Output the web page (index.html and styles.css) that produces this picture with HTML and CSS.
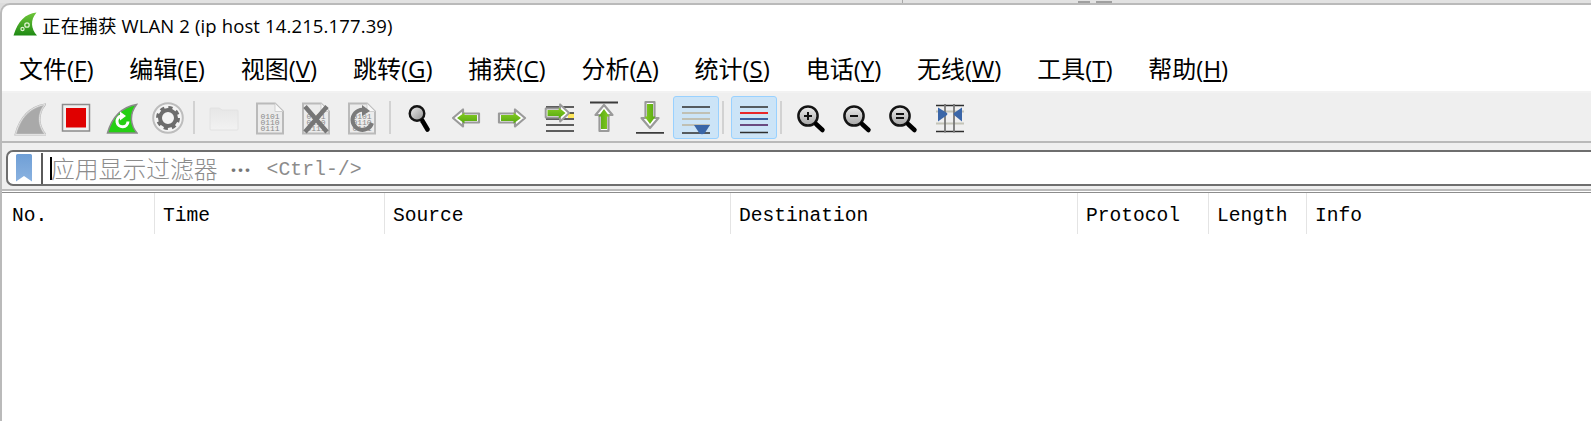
FILE: index.html
```html
<!DOCTYPE html>
<html lang="en">
<head>
  <meta charset="UTF-8">
  <meta name="viewport" content="width=device-width, initial-scale=1.0">
  <title>Wireshark</title>
  <link rel="stylesheet" href="styles.css">
</head>
<body>
  <!-- sliver of the window behind -->
  <div class="behind">
    <span class="behind-line"></span>
    <span class="behind-mark behind-mark-a"></span>
    <span class="behind-mark behind-mark-b"></span>
  </div>

  <div class="window">
    <!-- Title bar -->
    <div class="titlebar">
      <svg class="app-icon" width="24" height="24" viewBox="0 0 24 24">
        <defs>
          <linearGradient id="appGreen" x1="0" y1="0" x2="0" y2="1">
            <stop offset="0" stop-color="#6fc63a"/>
            <stop offset="1" stop-color="#1f8a14"/>
          </linearGradient>
        </defs>
        <path d="M23.5 .5C12 2 5 9 .5 23.500H24C18 17 17 8 23.500 .5Z" fill="url(#appGreen)"/>
        <circle cx="14" cy="13" r="2.200" fill="none" stroke="#dff2d0" stroke-width="1.300"/>
        <circle cx="9.500" cy="17" r="1.600" fill="none" stroke="#dff2d0" stroke-width="1.200"/>
      </svg>
      <span class="title-text">正在捕获 WLAN 2 (ip host 14.215.177.39)</span>
    </div>

    <!-- Menu -->
    <div class="menubar">
      <span class="menu-item">文件(<u>F</u>)</span>
      <span class="menu-item">编辑(<u>E</u>)</span>
      <span class="menu-item">视图(<u>V</u>)</span>
      <span class="menu-item">跳转(<u>G</u>)</span>
      <span class="menu-item">捕获(<u>C</u>)</span>
      <span class="menu-item">分析(<u>A</u>)</span>
      <span class="menu-item">统计(<u>S</u>)</span>
      <span class="menu-item">电话(<u>Y</u>)</span>
      <span class="menu-item">无线(<u>W</u>)</span>
      <span class="menu-item">工具(<u>T</u>)</span>
      <span class="menu-item">帮助(<u>H</u>)</span>
    </div>

    <!-- Toolbar -->
    <div class="toolbar">
      <div class="tool">
        <svg width="32" height="36" viewBox="0 0 32 36">
          <path d="M31 4.500C19 6.500 7 14 1.500 34.500H31.500C25 27 22.500 15 31 4.500Z" fill="#a9a9a9" stroke="#bcbcbc" stroke-width="2"/>
          <path d="M31 4.500C19 6.500 7 14 1.500 34.500H31.500C25 27 22.500 15 31 4.500Z" fill="none" stroke="#f2f2f2" stroke-width=".7"/>
        </svg>
      </div>
      <div class="tool">
        <svg width="32" height="36" viewBox="0 0 32 36">
          <rect x="2.500" y="4.500" width="27" height="26.500" fill="#f0f0f0" stroke="#8c8c8c" stroke-width="1.500"/>
          <rect x="6" y="8" width="20" height="19.500" fill="#e00000"/>
        </svg>
      </div>
      <div class="tool">
        <svg width="32" height="36" viewBox="0 0 32 36">
          <path d="M30.500 4.500C19 6.500 7 14 1.500 33H31C25 26 22.500 15 30.500 4.500Z" fill="#25cf14" stroke="#8a8a8a" stroke-width="1.500"/>
          <path d="M22 21.500A5.500 5.500 0 1 1 15 16" fill="none" stroke="#fff" stroke-width="3"/>
          <path d="M14 11.500L20 16L14 20.500Z" fill="#fff"/>
        </svg>
      </div>
      <div class="tool">
        <svg width="32" height="36" viewBox="0 0 32 36">
          <circle cx="16" cy="18" r="14.800" fill="#f4f4f4" stroke="#bdbdbd" stroke-width="2"/>
          <circle cx="16" cy="18" r="8" fill="none" stroke="#6d6d6d" stroke-width="4"/>
          <circle cx="16" cy="18" r="10.500" fill="none" stroke="#6d6d6d" stroke-width="3" stroke-dasharray="4.200 4.050"/>
        </svg>
      </div>
      <span class="tool-sep"></span>
      <div class="tool">
        <svg width="32" height="36" viewBox="0 0 32 36">
          <defs>
            <linearGradient id="folderFill" x1="0" y1="0" x2="0" y2="1">
              <stop offset="0" stop-color="#e6e6e6"/>
              <stop offset="1" stop-color="#f2f2f2"/>
            </linearGradient>
          </defs>
          <path d="M2 9a1 1 0 0 1 1-1H11L14 10H29a1 1 0 0 1 1 1V29a1 1 0 0 1-1 1H3a1 1 0 0 1-1-1Z" fill="url(#folderFill)" stroke="#e2e2e2"/>
        </svg>
      </div>
      <div class="tool">
        <svg width="32" height="36" viewBox="0 0 32 36">
          <use href="#doc"/>
        </svg>
      </div>
      <div class="tool">
        <svg width="32" height="36" viewBox="0 0 32 36">
          <use href="#doc"/>
          <path d="M5 6.500L27 32M27 6.500L5 32" stroke="#767676" stroke-width="4.500" fill="none"/>
        </svg>
      </div>
      <div class="tool">
        <svg width="32" height="36" viewBox="0 0 32 36">
          <use href="#doc"/>
          <path d="M20 10.500A10 10 0 1 0 26 23" fill="none" stroke="#7a7a7a" stroke-width="4"/>
          <path d="M16 5L24 11L16 16Z" fill="#7a7a7a"/>
        </svg>
      </div>
      <span class="tool-sep tool-sep-wide"></span>
      <div class="tool">
        <svg width="32" height="36" viewBox="0 0 32 36">
          <defs>
            <linearGradient id="lensFill" x1="0" y1="0" x2="1" y2="1">
              <stop offset="0" stop-color="#f0f0f0"/>
              <stop offset="1" stop-color="#8f8f8f"/>
            </linearGradient>
          </defs>
          <circle cx="13" cy="13.500" r="7.300" fill="url(#lensFill)" stroke="#141414" stroke-width="2.400"/>
          <path d="M18.500 21L23.500 29.500" stroke="#000" stroke-width="4.600" stroke-linecap="round"/>
        </svg>
      </div>
      <div class="tool">
        <svg width="32" height="36" viewBox="0 0 32 36">
          <use href="#arrow" transform="translate(2 0)"/>
        </svg>
      </div>
      <div class="tool">
        <svg width="32" height="36" viewBox="0 0 32 36">
          <use href="#arrow" transform="translate(30 0) scale(-1 1)"/>
        </svg>
      </div>
      <div class="tool">
        <svg width="32" height="36" viewBox="0 0 32 36">
          <rect x="26" y="13" width="6" height="5" fill="#ffe75a"/>
          <path d="M4 7H32M4 13H32M4 19H32M4 25H32M4 31H32" stroke="#2e2e2e" stroke-width="1.600"/>
          <use href="#arrow" transform="translate(28 -5) scale(-.9 1)"/>
        </svg>
      </div>
      <div class="tool">
        <svg width="32" height="36" viewBox="0 0 32 36">
          <path d="M2 2.500H30" stroke="#3c3c3c" stroke-width="1.800"/>
          <use href="#arrow" transform="translate(34 4) rotate(90)"/>
        </svg>
      </div>
      <div class="tool">
        <svg width="32" height="36" viewBox="0 0 32 36">
          <path d="M2 32.800H30" stroke="#3c3c3c" stroke-width="1.800"/>
          <use href="#arrow" transform="translate(-2 29) rotate(-90)"/>
        </svg>
      </div>
      <div class="tool tool-on">
        <svg width="32" height="36" viewBox="0 0 32 36">
          <path d="M2 7H30M2 33H30" stroke="#2e2e2e" stroke-width="1.600"/>
          <path d="M2 13H30M2 19H30M2 25H30" stroke="#c0c0b4" stroke-width="1.800"/>
          <path d="M14 25H30L24.500 33.500Q22 35 19.500 33.500Z" fill="#3a66a8"/>
        </svg>
      </div>
      <span class="tool-sep tool-sep-tight"></span>
      <div class="tool tool-on">
        <svg width="32" height="36" viewBox="0 0 32 36">
          <path d="M2 7H30M2 32.500H30" stroke="#2e2e2e" stroke-width="1.600"/>
          <path d="M2 13H30" stroke="#e8262a" stroke-width="1.800"/>
          <path d="M2 19H30" stroke="#3a5fa0" stroke-width="1.800"/>
          <path d="M2 25H30" stroke="#6a4a80" stroke-width="1.800"/>
        </svg>
      </div>
      <span class="tool-sep tool-sep-tight"></span>
      <div class="tool">
        <svg width="32" height="36" viewBox="0 0 32 36">
          <use href="#lens"/>
          <path d="M8 16H16M12 12V20" stroke="#111" stroke-width="2"/>
        </svg>
      </div>
      <div class="tool">
        <svg width="32" height="36" viewBox="0 0 32 36">
          <use href="#lens"/>
          <path d="M8 16H16" stroke="#111" stroke-width="2"/>
        </svg>
      </div>
      <div class="tool">
        <svg width="32" height="36" viewBox="0 0 32 36">
          <use href="#lens"/>
          <path d="M8 14H16M8 18H16" stroke="#111" stroke-width="2"/>
        </svg>
      </div>
      <div class="tool">
        <svg width="32" height="36" viewBox="0 0 32 36">
          <path d="M2 5.500H30M2 31.500H30" stroke="#2e2e2e" stroke-width="1.600"/>
          <path d="M2 11.500H30M2 23.500H30" stroke="#c4c4b8" stroke-width="1.800"/>
          <path d="M11 4V32.500M20 4V32.500" stroke="#777" stroke-width="1.800"/>
          <path d="M4 7.500L13 13Q13.800 14 13 15L4 21.500Z" fill="#3a66a8"/>
          <path d="M28 7.500L20 13Q19.200 14 20 15L28 21.500Z" fill="#3a66a8"/>
        </svg>
      </div>
    </div>

    <!-- Display filter -->
    <div class="filterbar">
      <div class="filter-box">
        <svg class="bookmark" width="16" height="28" viewBox="0 0 16 28">
          <defs>
            <linearGradient id="markFill" x1="0" y1="0" x2="0" y2="1">
              <stop offset="0" stop-color="#6f9fd6"/>
              <stop offset="1" stop-color="#8ab2e0"/>
            </linearGradient>
          </defs>
          <path d="M0 1.500Q0 0 1.500 0H14.500Q16 0 16 1.500V27.500L8 22L0 27.500Z" fill="url(#markFill)"/>
        </svg>
        <span class="filter-divider"></span>
        <span class="filter-caret"></span>
        <span class="filter-hint">应用显示过滤器</span>
        <span class="filter-dots">···</span>
        <span class="filter-key">&lt;Ctrl-/&gt;</span>
      </div>
    </div>

    <!-- Packet list -->
    <div class="packet-list">
      <div class="packet-head">
        <div class="col col-no">No.</div>
        <div class="col col-time">Time</div>
        <div class="col col-src">Source</div>
        <div class="col col-dst">Destination</div>
        <div class="col col-proto">Protocol</div>
        <div class="col col-len">Length</div>
        <div class="col col-info">Info</div>
      </div>
    </div>
  </div>

  <!-- shared icon parts -->
  <svg class="icon-defs" width="0" height="0">
    <defs>
      <linearGradient id="arrowGreen" x1="0" y1="0" x2="0" y2="1">
        <stop offset="0" stop-color="#86cc24"/>
        <stop offset="1" stop-color="#55a80f"/>
      </linearGradient>
      <linearGradient id="zoomFill" x1="0" y1="0" x2="0" y2="1">
        <stop offset="0" stop-color="#eeeeee"/>
        <stop offset="1" stop-color="#a4a4a4"/>
      </linearGradient>
      <g id="doc">
        <path d="M3 3.500H21L29 11.500V33.500H3Z" fill="#ececec" stroke="#bababa" stroke-width="2"/>
        <path d="M21 3.500V11.500H29" fill="#f8f8f8" stroke="#cfcfcf"/>
        <text class="doc-bits" x="16" y="19">0101</text>
        <text class="doc-bits" x="16" y="25">0110</text>
        <text class="doc-bits" x="16" y="31">0111</text>
      </g>
      <g id="arrow">
        <path d="M1 18L11 9.500V13.500H27V22.500H11V26.500Z" fill="#fff" stroke="#9a9a9a" stroke-width="2.200" stroke-linejoin="round"/>
        <path d="M5 18L12.500 12.500V15H25V21H12.500V23.500Z" fill="url(#arrowGreen)"/>
      </g>
      <g id="lens">
        <circle cx="12" cy="16" r="9.600" fill="url(#zoomFill)" stroke="#141414" stroke-width="2.500"/>
        <path d="M20 24L26.500 30" stroke="#000" stroke-width="4.500" stroke-linecap="round"/>
      </g>
    </defs>
  </svg>
</body>
</html>
```

FILE: styles.css
```css
body {
  font-family: "Open Sans", "Noto Sans CJK SC", sans-serif;
  margin: 0;
  padding: 0;
  background-color: #dcdcdc;
  color: #000;
  height: 421px;
  overflow: hidden;
}

.behind {
  height: 3px;
  position: relative;
  overflow: hidden;
  background-color: #e2e2e2;
}

.behind-line {
  position: absolute;
  left: 902px;
  top: 0;
  width: 1px;
  height: 3px;
  background-color: #a8a8a8;
}

.behind-mark {
  position: absolute;
  top: 1px;
  height: 2px;
  background-color: #a0a0a0;
}

.behind-mark-a {
  left: 1078px;
  width: 12px;
}

.behind-mark-b {
  left: 1096px;
  width: 16px;
}

.window {
  height: 418px;
  box-sizing: border-box;
  background-color: #fff;
  border-top: 2px solid #bababa;
  border-left: 2px solid #bababa;
  border-top-left-radius: 10px;
  overflow: hidden;
}

.titlebar {
  height: 36px;
  display: flex;
  align-items: center;
  padding-left: 11px;
}

.app-icon {
  flex: none;
  margin-top: 2px;
}

.title-text {
  margin-left: 5px;
  font-size: 18.500px;
  letter-spacing: .13px;
  margin-top: 3px;
  white-space: nowrap;
}

.menubar {
  height: 52px;
  display: flex;
  align-items: center;
  gap: 35.800px;
  padding-left: 17px;
  box-sizing: border-box;
  border-bottom: 2px solid #f2f2f2;
}

.menu-item {
  font-size: 24px;
  white-space: nowrap;
  margin-top: 2px;
}

.toolbar {
  height: 50px;
  box-sizing: border-box;
  padding-left: 5px;
  display: flex;
  background-color: #efefef;
  border-bottom: 2px solid #b9b9b9;
  padding-top: 3px;
}

.tool {
  width: 46px;
  height: 43px;
  box-sizing: border-box;
  flex: none;
  display: flex;
  justify-content: center;
  padding-top: 4px;
}

.tool-on {
  background-color: #cce4f7;
  border: 1px solid #99d1ff;
  border-radius: 3px;
  padding-top: 3px;
}

.tool-sep {
  flex: none;
  width: 2px;
  height: 33px;
  margin: 5px 6px 0 2px;
  background-color: #d2d2d2;
}

.tool-sep-wide {
  margin-left: 4px;
  margin-right: 6px;
}

.tool-sep-tight {
  margin-left: 3px;
  margin-right: 7px;
}

.doc-bits {
  font-family: "Liberation Mono", monospace;
  font-size: 8px;
  fill: #8a8a8a;
  text-anchor: middle;
}

.filterbar {
  height: 46px;
  box-sizing: border-box;
  background-color: #efefef;
  padding: 7px 0 0 4px;
}

.filter-box {
  height: 36px;
  box-sizing: border-box;
  background-color: #fff;
  border: 2px solid #6e6e6e;
  border-right: none;
  border-radius: 7px 0 0 7px;
  display: flex;
  align-items: center;
  padding-left: 8px;
  color: #8c8c8c;
}

.bookmark {
  flex: none;
}

.filter-divider {
  flex: none;
  width: 2px;
  height: 31px;
  margin-left: 9px;
  background-color: #5a5a5a;
}

.filter-caret {
  flex: none;
  width: 2px;
  height: 23px;
  margin-left: 7px;
  background-color: #000;
}

.filter-hint {
  margin-left: -1px;
  font-family: "Noto Sans CJK SC", sans-serif;
  font-size: 23.800px;
  font-weight: 300;
  line-height: 28px;
  white-space: nowrap;
}

.filter-dots {
  margin-left: 13px;
  margin-top: 4px;
  font-size: 21px;
  font-weight: 700;
  letter-spacing: 1px;
  color: #777;
}

.filter-key {
  margin-left: 15px;
  margin-top: 4px;
  font-family: "Liberation Mono", monospace;
  font-size: 19.800px;
}

.packet-list {
  border-top: 2px solid #bbb;
  padding-top: 1px;
  background-color: #fff;
}

.packet-head {
  border-top: 1px solid #8c8c8c;
  display: grid;
  grid-template-columns: 153px 230px 346px 347px 131px 98px 1fr;
  height: 42px;
  font-family: "Liberation Mono", monospace;
  font-size: 19.600px;
}

.col {
  padding-left: 8px;
  line-height: 47px;
  height: 41px;
  border-right: 1px solid #e4e4e4;
  white-space: nowrap;
}

.col-no {
  padding-left: 10px;
}

.col-info {
  border-right: none;
}

.icon-defs {
  position: absolute;
}
```
